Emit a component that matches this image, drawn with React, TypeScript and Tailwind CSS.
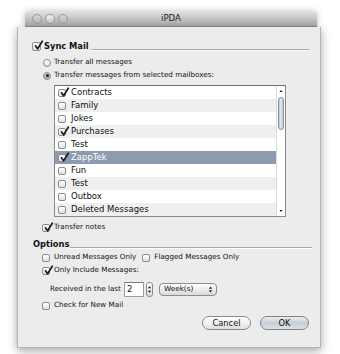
import React from "react";

const mailboxes: [string, boolean][] = [
  ["Contracts", true],
  ["Family", false],
  ["Jokes", false],
  ["Purchases", true],
  ["Test", false],
  ["ZappTek", true],
  ["Fun", false],
  ["Test", false],
  ["Outbox", false],
  ["Deleted Messages", false],
];

function Box({ checked, big }: { checked?: boolean; big?: boolean }) {
  return (
    <span
      className={`relative shrink-0 rounded-[2px] border border-[#8c8c8c] bg-gradient-to-b from-white to-[#e2e2e2] ${
        big ? "w-[9px] h-[9px]" : "w-[8px] h-[8px]"
      }`}
    >
      {checked && (
        <svg viewBox="0 0 10 10" className="absolute left-[1px] -top-[2px] w-[9px] h-[9px] overflow-visible">
          <path d="M1.6 5.4 L4 8.6 L9.2 0.2" fill="none" stroke="#1e1e1e" strokeWidth="1.9" strokeLinecap="round" strokeLinejoin="round" />
        </svg>
      )}
    </span>
  );
}

function Radio({ on }: { on?: boolean }) {
  return (
    <span
      className={`flex items-center justify-center w-[8px] h-[8px] shrink-0 rounded-full border border-[#8a8a8a] bg-gradient-to-b ${
        on ? "from-[#d6d6d6] to-[#a9a9a9]" : "from-white to-[#e0e0e0]"
      }`}
    >
      {on && <span className="w-[3px] h-[3px] rounded-full bg-[#222]" />}
    </span>
  );
}

function Light({ bright }: { bright?: boolean }) {
  return (
    <span
      className={`w-[10px] h-[10px] rounded-full border border-[#9a9a9a] bg-gradient-to-b ${
        bright ? "from-[#f4f4f4] to-[#c4c4c4]" : "from-[#d8d8d8] to-[#b4b4b4]"
      }`}
    />
  );
}

export default function App() {
  return (
    <div className="w-[340px] h-[354px] bg-white overflow-hidden font-['DejaVu_Sans',sans-serif] text-[#111]">
      {/* title bar of the parent window */}
      <div className="ml-[25px] mt-[11px] w-[292px] h-[16px] grid grid-cols-[1fr_auto_1fr] items-center rounded-t-[4px] border-b border-[#8d8d8d] bg-gradient-to-b from-[#e2e2e2] to-[#a9a9a9] shadow-[0_0_6px_rgba(0,0,0,0.25)]">
        <div className="flex items-center gap-[3px] pl-[7px]">
          <Light />
          <Light bright />
          <Light />
        </div>
        <span className="text-[8.6px] text-[#222]">iPDA</span>
        <div />
      </div>

      {/* sheet */}
      <div className="ml-[17px] w-[304px] bg-[#ececec] border border-t-0 border-[#b4b4b4] shadow-[0_3px_9px_rgba(0,0,0,0.35)] pt-[12px] pb-[17px]">
        <div className="flex items-center h-[14px] pl-[14px] pr-[11px]">
          <Box checked big />
          <span className="ml-[3px] text-[8.3px] font-bold">Sync Mail</span>
          <div className="flex-1 self-end mb-[2px] ml-[2px] border-t border-[#a6a6a6] border-b border-b-white" />
        </div>

        <div className="flex items-center h-[13px] mt-[3px] pl-[25px] gap-[3px] text-[7.2px]">
          <Radio />
          <span>Transfer all messages</span>
        </div>
        <div className="flex items-center h-[13px] pl-[25px] gap-[3px] text-[7.2px]">
          <Radio on />
          <span>Transfer messages from selected mailboxes:</span>
        </div>

        <div className="ml-[36px] mt-[3px] w-[232px] flex border border-[#8a8a8a] border-t-[#6f6f6f] bg-white">
          <div className="flex-1">
            {mailboxes.map(([name, on], i) => {
              const selected = i === 5;
              return (
                <div
                  key={i}
                  className={`flex items-center h-[13px] pl-[3px] gap-[5px] text-[8.5px] ${
                    selected ? "bg-[#8d9bb0] text-white" : i % 2 === 1 ? "bg-[#efefef]" : "bg-white"
                  }`}
                >
                  <Box checked={on} />
                  <span>{name}</span>
                </div>
              );
            })}
          </div>
          <div className="w-[9px] flex flex-col items-center border-l border-[#dcdcdc] bg-white">
            <svg viewBox="0 0 8 8" className="w-[8px] h-[8px] mt-[1px]">
              <path d="M2.5 5 L4 3 L5.5 5 Z" fill="#111" />
            </svg>
            <div className="mt-[2px] w-[6px] h-[33px] rounded-full border border-[#8595a8] bg-gradient-to-r from-[#b9c5d2] via-[#e9eef4] to-[#b3c0ce]" />
            <div className="flex-1" />
            <svg viewBox="0 0 8 8" className="w-[8px] h-[8px] mb-[1px]">
              <path d="M2.5 3 L4 5 L5.5 3 Z" fill="#111" />
            </svg>
          </div>
        </div>

        <div className="flex items-center h-[13px] mt-[4px] pl-[24px] gap-[4px] text-[7.2px]">
          <Box checked />
          <span>Transfer notes</span>
        </div>

        <div className="flex items-center h-[14px] mt-[3px] pl-[15px] pr-[8px]">
          <span className="text-[8.3px] font-bold">Options</span>
          <div className="flex-1 self-end mb-[2px] ml-[1px] border-t border-[#a6a6a6] border-b border-b-white" />
        </div>

        <div className="flex items-center h-[13px] pl-[24px] text-[7.2px]">
          <Box />
          <span className="ml-[4px]">Unread Messages Only</span>
          <span className="ml-[6px]" />
          <Box />
          <span className="ml-[4px]">Flagged Messages Only</span>
        </div>
        <div className="flex items-center h-[13px] pl-[24px] gap-[4px] text-[7.2px]">
          <Box checked />
          <span>Only Include Messages:</span>
        </div>

        <div className="flex items-center h-[15px] mt-[5px] pl-[32px] text-[7.2px]">
          <span>Received in the last</span>
          <div className="ml-[3px] w-[20px] h-[15px] flex items-center pl-[2px] border border-[#9c9c9c] border-t-[#7c7c7c] bg-white text-[8.5px]">
            2
          </div>
          <div className="ml-[2px] w-[7px] h-[15px] flex flex-col items-center justify-center rounded-[3px] border border-[#8c8c8c] bg-gradient-to-b from-white to-[#dcdcdc]">
            <svg viewBox="0 0 6 12" className="w-[5px] h-[11px]">
              <path d="M1 4.5 L3 2 L5 4.5 Z" fill="#111" />
              <path d="M1 7.5 L3 10 L5 7.5 Z" fill="#111" />
            </svg>
          </div>
          <div className="ml-[6px] w-[58px] h-[13px] flex items-center justify-between pl-[4px] pr-[3px] rounded-[4px] border border-[#8c8c8c] bg-gradient-to-b from-white to-[#d9d9d9] text-[7.3px]">
            <span>Week(s)</span>
            <svg viewBox="0 0 6 10" className="w-[5px] h-[9px]">
              <path d="M1 4 L3 1.5 L5 4 Z" fill="#222" />
              <path d="M1 6 L3 8.5 L5 6 Z" fill="#222" />
            </svg>
          </div>
        </div>

        <div className="flex items-center h-[13px] mt-[2px] pl-[24px] gap-[4px] text-[7.2px]">
          <Box />
          <span>Check for New Mail</span>
        </div>

        <div className="flex justify-end gap-[9px] mt-[4px] pr-[11px]">
          <button className="w-[49px] h-[14px] rounded-full border border-[#8a8a8a] bg-gradient-to-b from-white via-[#f2f2f2] to-[#dedede] text-[8.3px] text-[#111] leading-none">
            Cancel
          </button>
          <button className="w-[49px] h-[14px] rounded-full border border-[#7e848c] bg-gradient-to-b from-[#eceef1] via-[#c9ced5] to-[#dde1e6] text-[8.3px] text-[#111] leading-none">
            OK
          </button>
        </div>
      </div>
    </div>
  );
}
